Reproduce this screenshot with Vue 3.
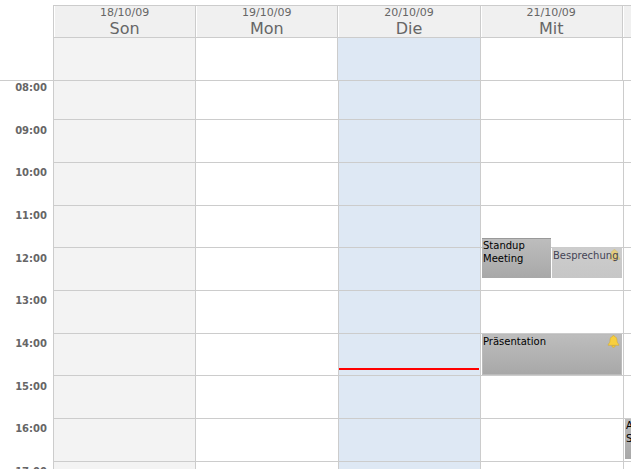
<script setup>
const days = [
  { date: '18/10/09', name: 'Son', kind: 'weekend' },
  { date: '19/10/09', name: 'Mon', kind: '' },
  { date: '20/10/09', name: 'Die', kind: 'today' },
  { date: '21/10/09', name: 'Mit', kind: '' },
]
const hours = ['08:00', '09:00', '10:00', '11:00', '12:00', '13:00', '14:00', '15:00', '16:00', '17:00']
</script>

<template>
  <div class="calendar">
    <div class="head">
      <div class="corner"></div>
      <div v-for="d in days" :key="d.date" class="head-cell">
        <div class="date">{{ d.date }}</div>
        <div class="name">{{ d.name }}</div>
      </div>
      <div class="head-cell rest"></div>
    </div>

    <div class="allday">
      <div class="corner"></div>
      <div v-for="d in days" :key="d.date" :class="['allday-cell', d.kind]"></div>
      <div class="allday-cell rest"></div>
    </div>

    <div class="grid">
      <div class="times">
        <div v-for="h in hours" :key="h" class="time">{{ h }}</div>
      </div>
      <div v-for="d in days" :key="d.date" :class="['col', d.kind]">
        <div v-for="h in hours" :key="h" class="slot"></div>
      </div>
      <div class="col rest">
        <div v-for="h in hours" :key="h" class="slot"></div>
      </div>

      <div class="now"></div>

      <div class="event standup"><span class="label">Standup Meeting</span></div>
      <div class="event besprechung">
        <svg class="bell" viewBox="0 0 12 12"><path d="M6 .5c.6 0 1 .4 1 .9 1.500.4 2.200 1.700 2.200 3.200 0 2 .6 3.200 1.800 4.100v.8H1v-.8C2.200 7.800 2.800 6.600 2.800 4.600c0-1.500.7-2.800 2.200-3.200 0-.5.4-.9 1-.9zM4.500 10h3c0 .9-.7 1.500-1.500 1.500S4.500 10.900 4.500 10z" /></svg>
        <span class="label">Besprechung</span>
      </div>
      <div class="event praesentation">
        <svg class="bell" viewBox="0 0 12 12"><path d="M6 .5c.6 0 1 .4 1 .9 1.500.4 2.200 1.700 2.200 3.200 0 2 .6 3.200 1.800 4.100v.8H1v-.8C2.200 7.800 2.800 6.600 2.800 4.600c0-1.500.7-2.800 2.200-3.200 0-.5.4-.9 1-.9zM4.500 10h3c0 .9-.7 1.500-1.500 1.500S4.500 10.900 4.500 10z" /></svg>
        <span class="label">Präsentation</span>
      </div>
      <div class="event clipped"><span class="label">A<br />S</span></div>
    </div>
  </div>
</template>

<style>
html,
body {
  margin: 0;
  height: 100%;
  overflow: hidden;
  background: #fff;
}
</style>

<style scoped>
.calendar {
  width: 631px;
  height: 469px;
  overflow: hidden;
  padding-top: 5px;
  box-sizing: border-box;
  font-family: "DejaVu Sans", sans-serif;
}

.head,
.allday,
.grid {
  display: flex;
  width: 700px;
}

.corner {
  width: 53px;
  flex: none;
}

.head-cell {
  width: 142.2px;
  height: 32px;
  flex: none;
  box-sizing: border-box;
  background: #f0f0f0;
  border-top: 1px solid #ccc;
  border-left: 1px solid #ccc;
  box-shadow: inset 1px 0 0 #fff;
  text-align: center;
  color: #666;
  overflow: hidden;
}

.head-cell.rest,
.allday-cell.rest,
.col.rest {
  width: 100px;
}

.date {
  font-size: 11px;
  line-height: 13px;
}

.name {
  font-size: 16px;
  line-height: 18px;
  margin-top: 1px;
}

.allday {
  height: 43px;
}

.allday-cell {
  width: 142.2px;
  flex: none;
  box-sizing: border-box;
  border-left: 1px solid #ccc;
  border-top: 1px solid #ccc;
}

.grid {
  position: relative;
  border-top: 1px solid #ccc;
}

.times {
  width: 53px;
  flex: none;
  padding-top: 1px;
}

.time {
  height: 42.667px;
  box-sizing: border-box;
  padding-right: 6px;
  text-align: right;
  font-size: 10px;
  font-weight: bold;
  line-height: 12px;
  color: #666;
}

.col {
  width: 142.4px;
  flex: none;
  box-sizing: border-box;
  border-left: 1px solid #ccc;
}

.slot {
  height: 42.667px;
  box-sizing: border-box;
  border-bottom: 1px solid #ccc;
}

.slot:first-child {
  height: 39.333px;
}

.weekend {
  background: #f3f3f3;
}

.today {
  background: #dee8f4;
}

/* sits over the grid, like the events */
.now {
  position: absolute;
  left: 339px;
  top: 287px;
  width: 140px;
  height: 2px;
  background: #f00;
}

.event {
  position: absolute;
  box-sizing: border-box;
  overflow: hidden;
  padding: 0 1px;
  font-size: 10px;
  line-height: 13px;
  color: #000;
  background: linear-gradient(#bdbdbd, #a8a8a8);
}

.label {
  position: relative;
}

.standup {
  left: 482px;
  top: 157px;
  width: 69px;
  height: 40px;
  border-top: 1px solid #999;
}

.besprechung {
  left: 552px;
  top: 167px;
  width: 70px;
  height: 30px;
  padding-top: 1px;
  color: #445;
  background: linear-gradient(#cdcdcd, #c6c6c6);
  white-space: nowrap;
}

.praesentation {
  left: 482px;
  top: 253px;
  width: 140px;
  height: 41px;
  border: 1px solid #bbb;
  padding: 0;
}

.clipped {
  left: 625px;
  top: 338px;
  width: 40px;
  height: 40px;
}

.bell {
  position: absolute;
  right: 1px;
  top: 0;
  width: 13px;
  height: 13px;
  fill: #f8cf3e;
  stroke: #cfa21c;
  stroke-width: 0.4;
}

.besprechung .bell {
  opacity: 0.55;
  top: 1px;
}
</style>
